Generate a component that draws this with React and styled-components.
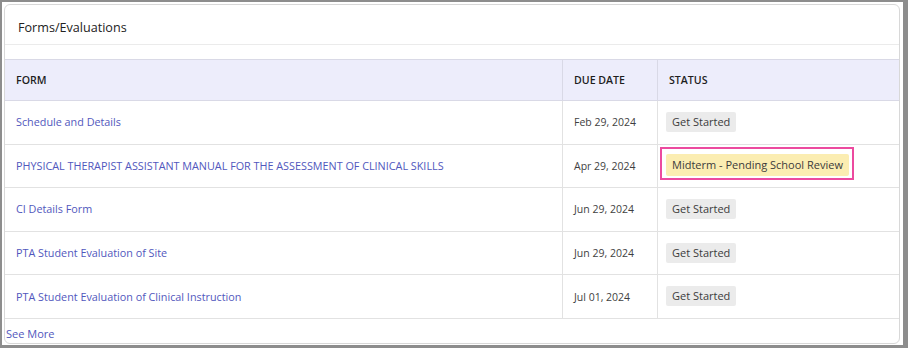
import React from 'react'
import styled, { createGlobalStyle } from 'styled-components'

const GlobalStyle = createGlobalStyle`
  html, body { margin: 0; padding: 0; background: #ffffff; }
  body { font-family: 'Open Sans', 'Liberation Sans', sans-serif; }
  * { box-sizing: border-box; }
`

//rows
const Rows = [
  { id: 1, title: 'Schedule and Details', due: 'Feb 29, 2024', status: 'Get Started' },
  { id: 2, title: 'PHYSICAL THERAPIST ASSISTANT MANUAL FOR THE ASSESSMENT OF CLINICAL SKILLS', due: 'Apr 29, 2024', status: 'Midterm - Pending School Review', pending: true },
  { id: 3, title: 'CI Details Form', due: 'Jun 29, 2024', status: 'Get Started' },
  { id: 4, title: 'PTA Student Evaluation of Site', due: 'Jun 29, 2024', status: 'Get Started' },
  { id: 5, title: 'PTA Student Evaluation of Clinical Instruction', due: 'Jul 01, 2024', status: 'Get Started' },
]

function App() {
  return (
    <>
      <GlobalStyle />
      <Frame>
        <Card>
          <CardHeader>Forms/Evaluations</CardHeader>
          <CardBody>
            <Table>
              <colgroup>
                <col style={{ width: 558 }} />
                <col style={{ width: 95 }} />
                <col />
              </colgroup>
              <thead>
                <tr>
                  <Th>Form</Th>
                  <Th>Due Date</Th>
                  <Th>Status</Th>
                </tr>
              </thead>
              <tbody>
                {Rows.map(row => (
                  <tr key={row.id}>
                    <Td><FormLink href="#">{row.title}</FormLink></Td>
                    <Td><DueDate>{row.due}</DueDate></Td>
                    <Td $status>
                      {row.pending ? (
                        <Highlight><Badge $pending>{row.status}</Badge></Highlight>
                      ) : (
                        <Badge>{row.status}</Badge>
                      )}
                    </Td>
                  </tr>
                ))}
              </tbody>
            </Table>
            <SeeMore href="#">See More</SeeMore>
          </CardBody>
        </Card>
      </Frame>
    </>
  )
}

const Frame = styled.div`
  width: 908px;
  height: 348px;
  border: 2px solid #8d8d8d;
  border-right-width: 5px;
  border-bottom-width: 3px;
  padding: 2px 3px 1px 2px;
  display: flex;
`

const Card = styled.div`
  flex: 1;
  border: 1px solid #d8d8d8;
  border-radius: 6px;
  display: flex;
  flex-direction: column;
  overflow: hidden;
`

const CardHeader = styled.div`
  height: 40px;
  padding: 5px 13px 0;
  display: flex;
  align-items: center;
  border-bottom: 1px solid #ebebeb;
  font-size: 12.6px;
  font-weight: 500;
  color: #222222;
`

const CardBody = styled.div`
  padding-top: 14px;
  display: flex;
  flex-direction: column;
`

const Table = styled.table`
  border-collapse: collapse;
  table-layout: fixed;
  margin-left: -1px;
  width: calc(100% + 2px);
`

const Th = styled.th`
  height: 41px;
  background: #ededfb;
  border: 1px solid #d9d9e6;
  padding: 0 11px;
  text-align: left;
  text-transform: uppercase;
  font-size: 10.6px;
  font-weight: 600;
  color: #1e1e1e;
`

const Td = styled.td`
  height: 43.6px;
  border: 1px solid #e2e2e2;
  padding: 0 ${p => (p.$status ? '8px' : '11px')} 4px;
  vertical-align: middle;
`

const FormLink = styled.a`
  color: #5157bd;
  text-decoration: none;
  font-size: 10.8px;
`

const DueDate = styled.span`
  color: #3f3f3f;
  font-size: 10.5px;
`

const Highlight = styled.span`
  display: inline-block;
  margin-left: -6px;
  padding: 3px 3px 2px 4px;
  border: 2px solid #ec4a9f;
`

const Badge = styled.span`
  display: inline-block;
  padding: 0 6px;
  border-radius: 2px;
  font-size: 11px;
  line-height: ${p => (p.$pending ? '22px' : '20px')};
  color: #3b3b3b;
  background: ${p => (p.$pending ? '#fbedb2' : '#ebebeb')};
`

const SeeMore = styled.a`
  display: block;
  padding: 7px 0 0 1px;
  color: #5157bd;
  text-decoration: none;
  font-size: 11px;
`

export default App
